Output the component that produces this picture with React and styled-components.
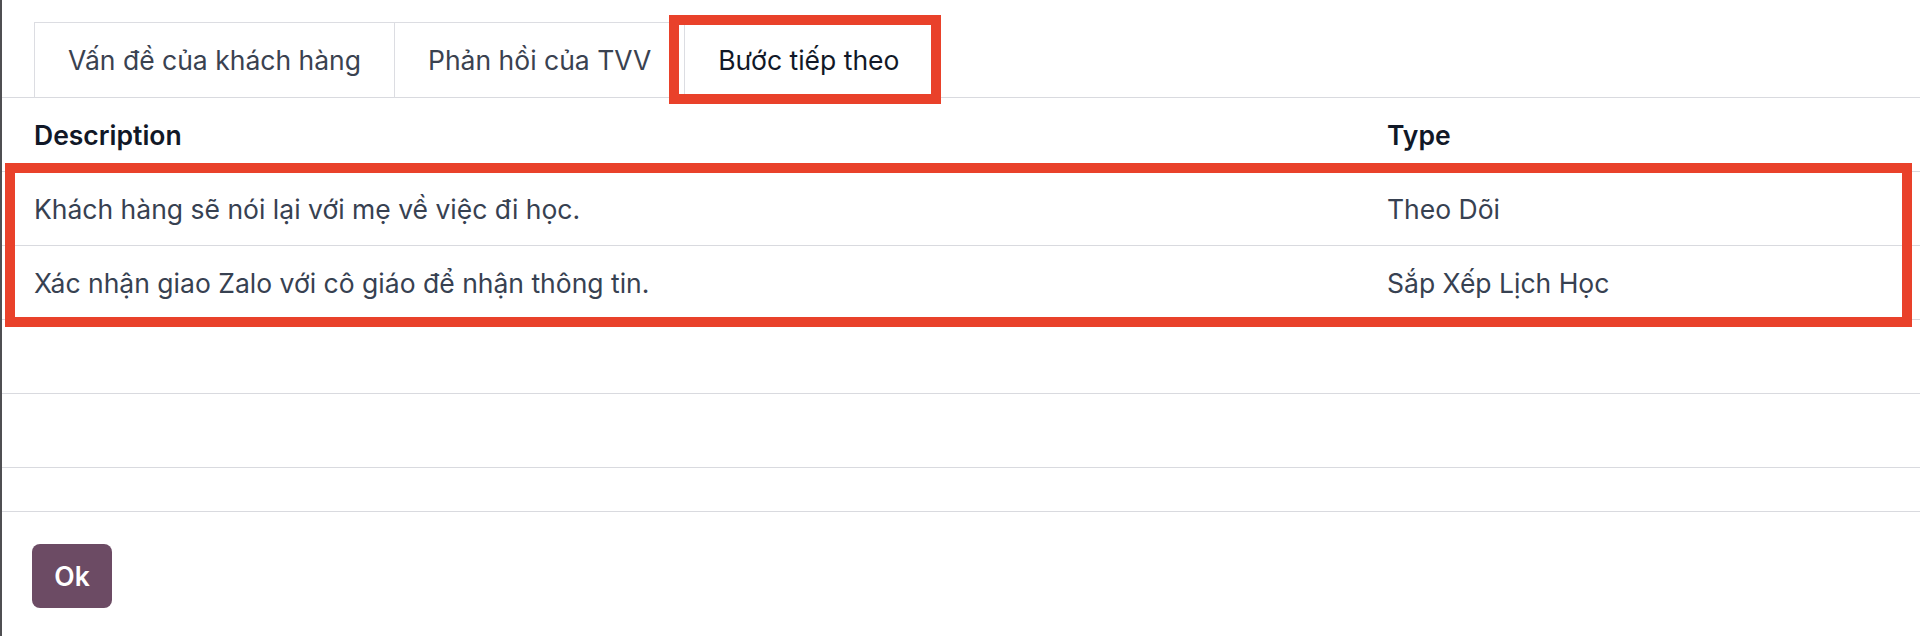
import React from 'react';
import styled, { createGlobalStyle } from 'styled-components';

const GlobalStyle = createGlobalStyle`
  body {
    margin: 0;
    background: #fff;
    font-family: Inter, "Noto Sans", "Liberation Sans", sans-serif;
  }
`;

const tabs = ['Vấn đề của khách hàng', 'Phản hồi của TVV', 'Bước tiếp theo'];

const steps = [
  { description: 'Khách hàng sẽ nói lại với mẹ về việc đi học.', type: 'Theo Dõi' },
  { description: 'Xác nhận giao Zalo với cô giáo để nhận thông tin.', type: 'Sắp Xếp Lịch Học' },
];

const App = () => {
  return (
    <>
      <GlobalStyle />
      <Page>
        <TabBar>
          {tabs.map((label, i) => (
            <Tab key={label} $active={i === tabs.length - 1}>
              {label}
            </Tab>
          ))}
        </TabBar>

        <Table>
          <colgroup>
            <col style={{ width: '1353px' }} />
            <col />
          </colgroup>
          <thead>
            <tr>
              <HeadCell>Description</HeadCell>
              <HeadCell>Type</HeadCell>
            </tr>
          </thead>
          <tbody>
            {steps.map((s) => (
              <Row key={s.description}>
                <Cell>{s.description}</Cell>
                <Cell>{s.type}</Cell>
              </Row>
            ))}
            <Row>
              <Cell />
              <Cell />
            </Row>
            <Row>
              <Cell />
              <Cell />
            </Row>
            <Row $short>
              <Cell />
              <Cell />
            </Row>
          </tbody>
        </Table>

        <Footer>
          <OkButton>Ok</OkButton>
        </Footer>

        {/* annotation boxes */}
        <Highlight $left={667} $top={15} $width={272} $height={89} />
        <Highlight $left={3} $top={163} $width={1907} $height={164} />
      </Page>
    </>
  );
};

const Page = styled.div`
  position: relative;
  min-height: 636px;
  border-left: 2px solid #4f4f52;
  box-sizing: border-box;
`;

const TabBar = styled.div`
  display: flex;
  padding: 22px 0 0 32px;
  border-bottom: 1px solid #d9dadf;
`;

const Tab = styled.div`
  display: flex;
  align-items: center;
  height: 74px;
  padding: 0 33px;
  margin-bottom: -1px;
  margin-right: -1px;
  border: 1px solid #dcdde2;
  border-bottom: 1px solid ${(p) => (p.$active ? '#fff' : '#d9dadf')};
  background: #fff;
  font-size: 26.5px;
  color: ${(p) => (p.$active ? '#111827' : '#3a4250')};
  white-space: nowrap;
`;

const Table = styled.table`
  width: 100%;
  border-collapse: collapse;
  table-layout: fixed;
  font-size: 26.5px;
`;

const HeadCell = styled.th`
  height: 73px;
  padding: 0 32px;
  text-align: left;
  font-weight: 600;
  color: #111827;
  border-bottom: 1px solid #d9dadf;
`;

const Row = styled.tr`
  height: ${(p) => (p.$short ? '44px' : '74px')};
  border-bottom: 1px solid #d9dadf;
`;

const Cell = styled.td`
  padding: 0 32px;
  color: #374151;
  white-space: nowrap;
`;

const Footer = styled.div`
  padding: 32px 30px;
`;

const OkButton = styled.button`
  width: 80px;
  height: 64px;
  border: none;
  border-radius: 8px;
  background: #6c4b64;
  color: #fff;
  font-family: Inter, "Noto Sans", sans-serif;
  font-size: 26.5px;
  font-weight: 600;
  cursor: pointer;
`;

const Highlight = styled.div`
  position: absolute;
  left: ${(p) => p.$left}px;
  top: ${(p) => p.$top}px;
  width: ${(p) => p.$width}px;
  height: ${(p) => p.$height}px;
  border: 10px solid #e9412a;
  box-sizing: border-box;
  pointer-events: none;
`;

export default App;
